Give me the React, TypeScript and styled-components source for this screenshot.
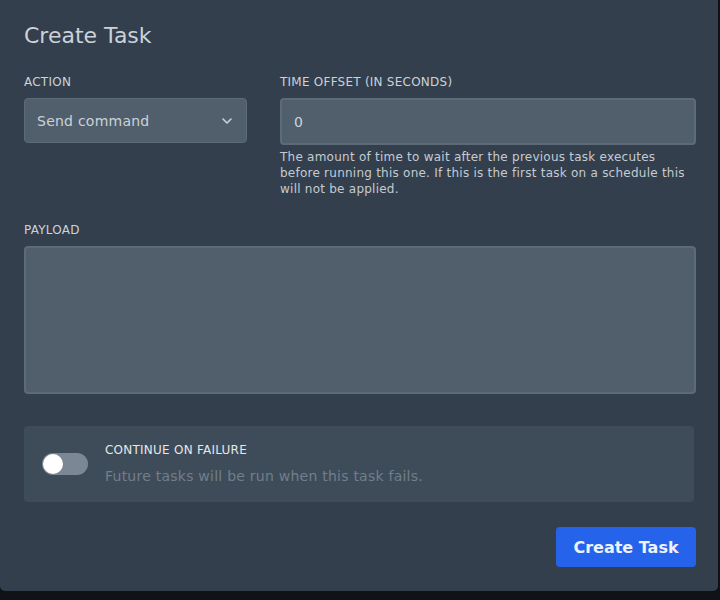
import React from 'react';
import styled, { createGlobalStyle } from 'styled-components';

const GlobalStyle = createGlobalStyle`
  html, body {
    margin: 0;
    padding: 0;
    background: #0f1216;
    font-family: "DejaVu Sans", "Noto Sans", sans-serif;
    letter-spacing: 0.015em;
  }
  * { box-sizing: border-box; }
`;

// Styled components
const Panel = styled.div`
  width: 718px;
  background: #333f4c;
  border-radius: 0 0 5px 5px;
  padding: 21px 24px 24px 24px;
`;

const Title = styled.h2`
  margin: 0;
  font-size: 22px;
  line-height: 30px;
  font-weight: 500;
  letter-spacing: normal;
  color: #cbd2d9;
`;

const TopGrid = styled.div`
  display: grid;
  grid-template-columns: 223px 1fr;
  column-gap: 33px;
  margin-top: 22px;
  margin-right: -2px;
`;

const Field = styled.div`
  display: flex;
  flex-direction: column;
`;

const Label = styled.label`
  font-size: 12px;
  line-height: 18px;
  color: #cbd2d9;
  text-transform: uppercase;
  margin-bottom: 7px;
`;

const SelectBox = styled.div`
  height: 45px;
  display: flex;
  align-items: center;
  justify-content: space-between;
  padding: 0 14px 0 12px;
  background: #515f6c;
  border: 1px solid #5d6b78;
  border-radius: 4px;
  font-size: 14px;
  color: #cbd2d9;
`;

const Input = styled.div<{ $height: number }>`
  height: ${(p) => p.$height}px;
  padding: 0 12px;
  display: flex;
  align-items: ${(p) => (p.$height > 60 ? 'flex-start' : 'center')};
  background: #515f6c;
  border: 2px solid #5d6b78;
  border-radius: 4px;
  font-size: 14px;
  color: #cbd2d9;
`;

const Helper = styled.p`
  margin: 4px 0 0 0;
  font-size: 12px;
  line-height: 16px;
  color: #c4cbd3;
`;

const PayloadField = styled(Field)`
  margin-top: 24px;
  margin-right: -2px;
`;

const SwitchCard = styled.div`
  margin-top: 32px;
  background: #3e4c59;
  border-radius: 4px;
  padding: 15px 16px 16px 18px;
  display: flex;
  align-items: center;
  gap: 17px;
`;

const Toggle = styled.div<{ $on: boolean }>`
  position: relative;
  flex: none;
  width: 46px;
  height: 22px;
  border-radius: 11px;
  background: ${(p) => (p.$on ? '#2563eb' : '#7b8794')};

  &::after {
    content: '';
    position: absolute;
    top: 1px;
    left: ${(p) => (p.$on ? '25px' : '1px')};
    width: 20px;
    height: 20px;
    border-radius: 50%;
    background: #ffffff;
  }
`;

const SwitchText = styled.div`
  display: flex;
  flex-direction: column;
  gap: 7px;
`;

const SwitchLabel = styled.div`
  font-size: 12px;
  line-height: 18px;
  color: #e4e7eb;
  text-transform: uppercase;
`;

const SwitchDesc = styled.div`
  font-size: 14px;
  line-height: 20px;
  color: #717e8b;
`;

const Footer = styled.div`
  display: flex;
  justify-content: flex-end;
  margin-top: 25px;
  margin-right: -2px;
`;

const Button = styled.button`
  width: 140px;
  height: 40px;
  border: none;
  border-radius: 4px;
  background: #2563eb;
  color: #eef2fb;
  font-family: "DejaVu Sans", sans-serif;
  font-size: 16px;
  font-weight: bold;
  letter-spacing: normal;
  cursor: pointer;
`;

const Chevron = () => (
  <svg width="10" height="6" viewBox="0 0 10 6" fill="none">
    <path d="M1 1l4 4 4-4" stroke="#cbd2d9" strokeWidth="1.6" strokeLinecap="round" strokeLinejoin="round" />
  </svg>
);

const App: React.FC = () => {
  return (
    <>
      <GlobalStyle />
      <Panel>
        <Title>Create Task</Title>
        <TopGrid>
          <Field>
            <Label>Action</Label>
            <SelectBox>
              <span>Send command</span>
              <Chevron />
            </SelectBox>
          </Field>
          <Field>
            <Label>Time offset (in seconds)</Label>
            <Input $height={47}>0</Input>
            <Helper>
              The amount of time to wait after the previous task executes before running this one. If this is
              the first task on a schedule this will not be applied.
            </Helper>
          </Field>
        </TopGrid>
        <PayloadField>
          <Label>Payload</Label>
          <Input $height={148} />
        </PayloadField>
        <SwitchCard>
          <Toggle $on={false} />
          <SwitchText>
            <SwitchLabel>Continue on failure</SwitchLabel>
            <SwitchDesc>Future tasks will be run when this task fails.</SwitchDesc>
          </SwitchText>
        </SwitchCard>
        <Footer>
          <Button>Create Task</Button>
        </Footer>
      </Panel>
    </>
  );
};

export default App;
